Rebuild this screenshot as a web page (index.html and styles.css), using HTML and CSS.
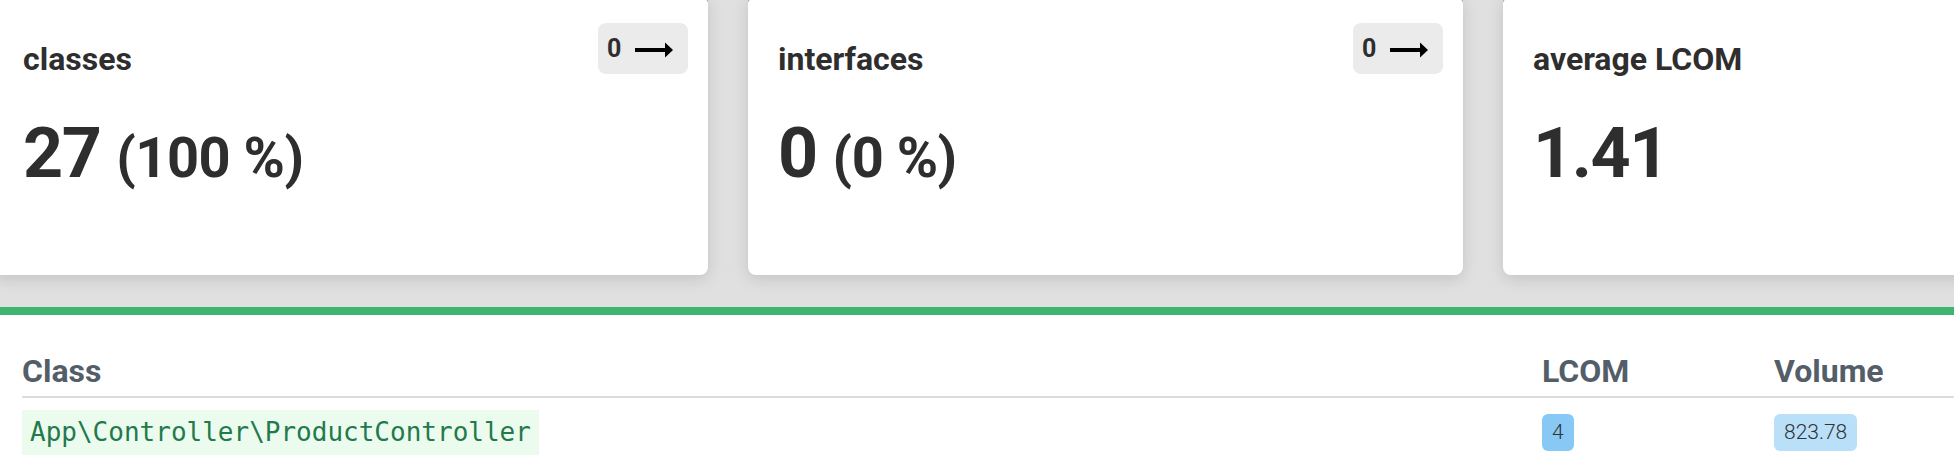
FILE: index.html
```html
<!DOCTYPE html>
<html lang="en">
<head>
<meta charset="utf-8">
<title>Cohesion</title>
<link rel="stylesheet" href="styles.css">
</head>
<body>
<div class="cards">
  <div class="card">
    <div class="card-head">
      <h2 class="card-title">classes</h2>
      <a class="trend" href="#">0
        <svg class="arrow" width="38" height="16" viewBox="0 0 38 16"><rect x="0" y="6" width="31" height="4" fill="#000"/><polygon points="30,0.5 38,8 30,15.5" fill="#000"/></svg>
      </a>
    </div>
    <div class="card-value">27 <small>(100 %)</small></div>
  </div>
  <div class="card">
    <div class="card-head">
      <h2 class="card-title">interfaces</h2>
      <a class="trend" href="#">0
        <svg class="arrow" width="38" height="16" viewBox="0 0 38 16"><rect x="0" y="6" width="31" height="4" fill="#000"/><polygon points="30,0.5 38,8 30,15.5" fill="#000"/></svg>
      </a>
    </div>
    <div class="card-value">0 <small>(0 %)</small></div>
  </div>
  <div class="card">
    <div class="card-head">
      <h2 class="card-title">average LCOM</h2>
    </div>
    <div class="card-value">1.41</div>
  </div>
</div>
<section class="panel">
  <table class="metrics">
    <colgroup><col class="c-class"><col class="c-num"><col class="c-num"></colgroup>
    <thead>
      <tr><th>Class</th><th>LCOM</th><th>Volume</th></tr>
    </thead>
    <tbody>
      <tr>
        <td><code class="cls">App\Controller\ProductController</code></td>
        <td><span class="badge badge-strong">4</span></td>
        <td><span class="badge badge-light">823.78</span></td>
      </tr>
    </tbody>
  </table>
</section>
</body>
</html>
```
FILE: styles.css
```css
html, body {
  margin: 0;
  padding: 0;
  overflow: hidden;
}
body {
  background: #e0e0e0;
  font-family: Roboto, "Liberation Sans", Arial, sans-serif;
  color: #2e2e2e;
}
.cards {
  display: flex;
  gap: 40px;
  margin: -5px 0 0 -7px;
}
.card {
  flex: 0 0 715px;
  box-sizing: border-box;
  height: 280px;
  background: #fff;
  border-top: 3px solid #3fb370;
  border-radius: 8px;
  box-shadow: 0 4px 16px rgba(0, 0, 0, 0.13);
  padding: 25px 20px 0 30px;
}
.card-head {
  display: flex;
  justify-content: space-between;
  align-items: flex-start;
}
.card-title {
  margin: 17px 0 0;
  font-size: 32px;
  line-height: 38px;
  font-weight: 700;
  color: #2e2e2e;
}
.trend {
  display: flex;
  align-items: center;
  gap: 14px;
  box-sizing: border-box;
  height: 51px;
  width: 90px;
  padding: 0 14px 0 9px;
  background: #ebebeb;
  border-radius: 8px;
  color: #2e2e2e;
  text-decoration: none;
  font-size: 25px;
  font-weight: 700;
}
.arrow {
  display: block;
  flex: 0 0 auto;
  margin-top: 3px;
}
.card-value {
  margin-top: 34px;
  font-size: 70px;
  line-height: 82px;
  font-weight: 700;
  letter-spacing: -1.5px;
  color: #2e2e2e;
}
.card-value small {
  font-size: 56px;
  line-height: 1;
  font-weight: 700;
  letter-spacing: -0.5px;
}
.panel {
  margin-top: 32px;
  background: #fff;
  border-top: 8px solid #3fb370;
  padding: 37px 0 30px 22px;
}
.metrics {
  table-layout: fixed;
  width: 1984px;
  border-collapse: separate;
  border-spacing: 0;
}
.c-class { width: 1520px; }
.c-num { width: 232px; }
.metrics th {
  text-align: left;
  font-size: 32px;
  line-height: 38px;
  font-weight: 700;
  color: #535e69;
  padding: 0 0 6px;
  border-bottom: 2px solid #dcdcdc;
}
.metrics td {
  padding: 12px 0 0;
  vertical-align: middle;
}
.cls {
  display: inline-block;
  font-family: "DejaVu Sans Mono", "Liberation Mono", monospace;
  font-size: 26px;
  line-height: 31px;
  padding: 7px 8px;
  background: #ebfcef;
  color: #23794c;
}
.badge {
  display: inline-block;
  font-size: 21px;
  line-height: 25px;
  font-weight: 300;
  padding: 6px 10px;
  border-radius: 6px;
  color: #333;
}
.badge-strong { background: #88c8f4; }
.badge-light { background: #b9e0f8; }
```
